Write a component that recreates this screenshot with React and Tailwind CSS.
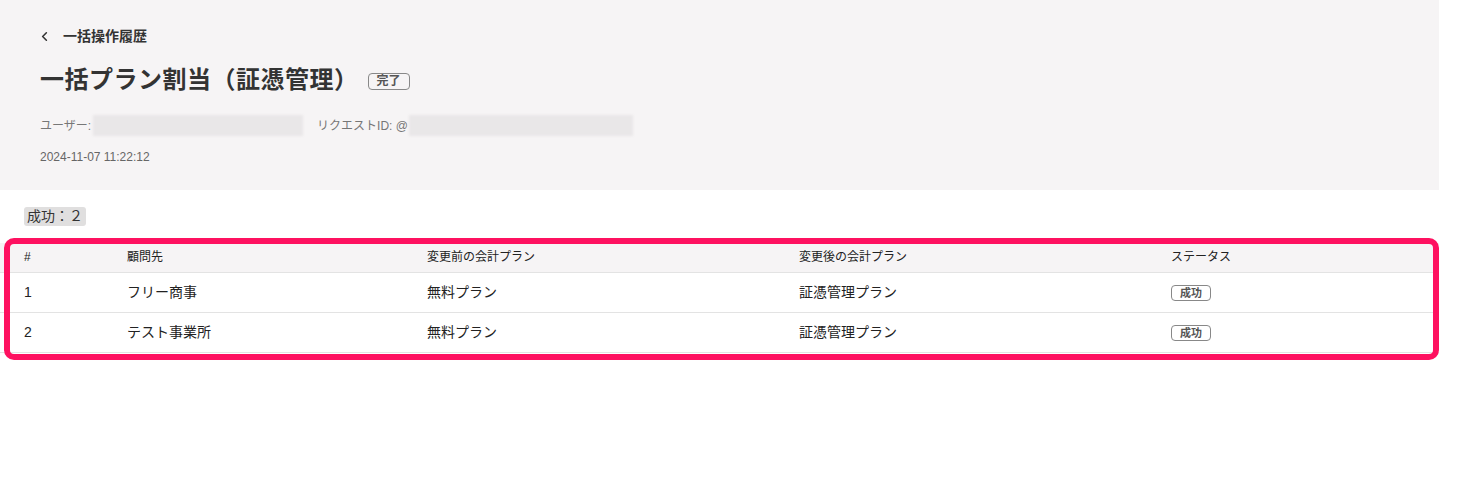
import { ChevronLeft } from "lucide-react";

const rows = [
  { id: 1, client: "フリー商事", before: "無料プラン", after: "証憑管理プラン", status: "成功" },
  { id: 2, client: "テスト事業所", before: "無料プラン", after: "証憑管理プラン", status: "成功" },
];

const font = { fontFamily: '"Liberation Sans", "Noto Sans CJK JP", sans-serif' };

export default function App() {
  return (
    <div className="relative w-[1439px] bg-white text-[#222]" style={font}>
      {/* page header */}
      <div className="bg-[#f6f4f5] px-10 pt-[26px] pb-[25px]">
        <div className="flex h-5 items-center gap-[11px] text-[14px] font-bold text-[#333]">
          <ChevronLeft className="h-[15px] w-[15px] -ml-[3px]" strokeWidth={2.5} />
          <span>一括操作履歴</span>
        </div>
        <div className="mt-[18px] flex h-8 items-center gap-[9px]">
          <h1 className="text-[24px] font-bold leading-8 tracking-[0.5px] text-[#333]">一括プラン割当（証憑管理）</h1>
          <span className="mt-[2px] flex h-[17px] items-center rounded-[4px] border border-[#888] px-[8px] text-[12px] font-bold text-[#555]">完了</span>
        </div>
        <div className="mt-[19px] flex h-[21px] items-center text-[12px] text-[#777]">
          <span>ユーザー:</span>
          <span className="ml-[2px] h-[21px] w-[210px] bg-[#e9e7e8] blur-[1px]"></span>
          <span className="ml-[14px]">リクエストID: @</span>
          <span className="ml-[1px] h-[21px] w-[224px] bg-[#e9e7e8] blur-[1px]"></span>
        </div>
        <div className="mt-[13px] text-[12px] leading-4 text-[#666]">2024-11-07 11:22:12</div>
      </div>

      {/* summary */}
      <div className="flex px-6 pt-[17px]">
        <span className="inline-flex h-[19px] items-center rounded-[3px] bg-[#e0dfdf] px-[3px] text-[14px] text-[#333]">成功：２</span>
      </div>

      {/* results table */}
      <table className="mt-[17px] w-full table-fixed border-collapse text-left">
        <colgroup>
          <col className="w-[103px]" />
          <col className="w-[300px]" />
          <col className="w-[372px]" />
          <col className="w-[372px]" />
          <col />
        </colgroup>
        <thead>
          <tr className="h-[29px] border-b border-[#e3e3e3] bg-[#f6f4f5] text-[12px] text-[#222]">
            <th className="pl-6 font-normal">#</th>
            <th className="pl-6 font-normal">顧問先</th>
            <th className="pl-6 font-normal">変更前の会計プラン</th>
            <th className="pl-6 font-normal">変更後の会計プラン</th>
            <th className="pl-6 font-normal">ステータス</th>
          </tr>
        </thead>
        <tbody>
          {rows.map((r) => (
            <tr key={r.id} className="h-10 border-b border-[#e3e3e3] text-[14px] text-[#222]">
              <td className="pl-6">{r.id}</td>
              <td className="pl-6">{r.client}</td>
              <td className="pl-6">{r.before}</td>
              <td className="pl-6">{r.after}</td>
              <td className="pl-6">
                <span className="inline-flex h-[16px] items-center rounded-[4px] border border-[#888] px-[8px] text-[11px] font-bold text-[#555]">
                  {r.status}
                </span>
              </td>
            </tr>
          ))}
        </tbody>
      </table>

      {/* highlight frame */}
      <div className="pointer-events-none absolute left-[4px] top-[238px] h-[122px] w-[1435px] rounded-[10px] border-[6px] border-[#fe1160]"></div>

      <div className="h-[119px]"></div>
    </div>
  );
}
